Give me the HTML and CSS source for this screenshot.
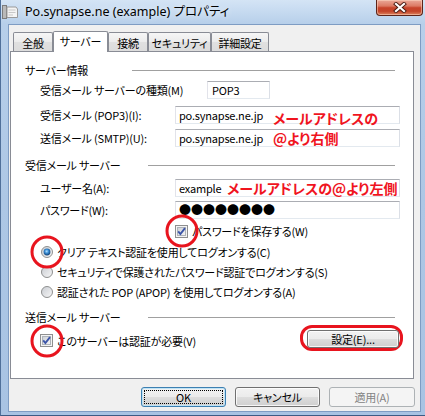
FILE: index.html
```html
<!DOCTYPE html>
<html lang="ja">
<head>
<meta charset="utf-8">
<title>Po.synapse.ne (example) プロパティ</title>
<link rel="stylesheet" href="styles.css">
</head>
<body>
<div class="window">
  <div class="titlebar">
    <svg class="app-icon" width="16" height="14" viewBox="0 0 16 14">
      <rect x="0.5" y="0.5" width="4" height="13" fill="#b9b9b9" stroke="#7d7d7d"/>
      <path d="M5 2 H14 L15.5 4 V12.5 H5 Z" fill="#f4f4f4" stroke="#9a9a9a"/>
      <path d="M6.5 5 H13.5 M6.5 7.5 H13.5 M6.5 10 H11" stroke="#c8c8c8"/>
    </svg>
    <span class="title">Po.synapse.ne (example) プロパティ</span>
    <div class="close">
      <svg width="14" height="11" viewBox="0 0 14 11">
        <path d="M3 2 L11 9 M11 2 L3 9" stroke="#4a1b12" stroke-width="4" stroke-linecap="square"/>
        <path d="M3 2 L11 9 M11 2 L3 9" stroke="#ffffff" stroke-width="2.2" stroke-linecap="square"/>
      </svg>
    </div>
  </div>

  <div class="client">
    <div class="tabs">
      <div class="tab tab-w40">全般</div>
      <div class="tab tab-active tab-w55">サーバー</div>
      <div class="tab tab-w40">接続</div>
      <div class="tab tab-w63">セキュリティ</div>
      <div class="tab tab-w58">詳細設定</div>
    </div>

    <div class="panel">
      <div class="grp-head">
        <span class="grp-title grp-title-short">サーバー情報</span>
        <span class="grp-line grp-line-long"></span>
      </div>

      <div class="row mt1">
        <span class="lbl lbl-wide">受信メール サーバーの種類(M)</span>
        <div class="field field-short">POP3</div>
      </div>

      <div class="row mt7">
        <span class="lbl">受信メール (POP3)(I):</span>
        <div class="field">
          <span class="val val-host">po.synapse.ne.jp</span>
          <span class="note note-low">メールアドレスの</span>
        </div>
      </div>

      <div class="row mt5">
        <span class="lbl">送信メール (SMTP)(U):</span>
        <div class="field">
          <span class="val val-host">po.synapse.ne.jp</span>
          <span class="note">@より右側</span>
        </div>
      </div>

      <div class="grp-head mt8">
        <span class="grp-title grp-title-long">受信メール サーバー</span>
        <span class="grp-line"></span>
      </div>

      <div class="row mt4">
        <span class="lbl">ユーザー名(A):</span>
        <div class="field">
          <span class="val val-user">example</span>
          <span class="note">メールアドレスの@より左側</span>
        </div>
      </div>

      <div class="row mt4">
        <span class="lbl">パスワード(W):</span>
        <div class="field">
          <span class="dots">●●●●●●●●</span>
        </div>
      </div>

      <div class="row row-save mt3">
        <span class="circled">
          <svg class="check" width="13" height="13" viewBox="0 0 13 13">
            <defs>
              <linearGradient id="cb1" x1="0" y1="0" x2="1" y2="1">
                <stop offset="0" stop-color="#cbcfd5"/>
                <stop offset="1" stop-color="#f6f6f6"/>
              </linearGradient>
            </defs>
            <rect x="0.5" y="0.5" width="12" height="12" fill="#f4f4f4" stroke="#8e8f8f"/>
            <rect x="2.5" y="2.5" width="8" height="8" fill="url(#cb1)" stroke="#aeb3b9"/>
            <path d="M3.2 6.4 L5.4 9 L10 3.2" stroke="#3b55a8" stroke-width="1.9" fill="none"/>
          </svg>
        </span>
        <span class="opt-text">パスワードを保存する(W)</span>
      </div>

      <div class="row row-radio mt3">
        <span class="circled">
          <svg class="radio" width="12" height="12" viewBox="0 0 12 12">
            <defs>
              <linearGradient id="rb1" x1="0" y1="0" x2="1" y2="1">
                <stop offset="0" stop-color="#c9ccd2"/>
                <stop offset="1" stop-color="#f7f7f7"/>
              </linearGradient>
              <radialGradient id="rd1" cx="0.45" cy="0.4" r="0.6">
                <stop offset="0" stop-color="#b7e3ff"/>
                <stop offset="0.45" stop-color="#3b8fd6"/>
                <stop offset="1" stop-color="#123f73"/>
              </radialGradient>
            </defs>
            <circle cx="6" cy="6" r="5.5" fill="url(#rb1)" stroke="#8e8f8f"/>
            <circle cx="6" cy="6" r="3.4" fill="url(#rd1)"/>
          </svg>
        </span>
        <span class="opt-text">クリア テキスト認証を使用してログオンする(C)</span>
      </div>

      <div class="row row-radio mt2">
        <svg class="radio" width="12" height="12" viewBox="0 0 12 12">
          <defs>
            <linearGradient id="rb2" x1="0" y1="0" x2="1" y2="1">
              <stop offset="0" stop-color="#c9ccd2"/>
              <stop offset="1" stop-color="#f7f7f7"/>
            </linearGradient>
          </defs>
          <circle cx="6" cy="6" r="5.5" fill="url(#rb2)" stroke="#8e8f8f"/>
        </svg>
        <span class="opt-text">セキュリティで保護されたパスワード認証でログオンする(S)</span>
      </div>

      <div class="row row-radio mt2">
        <svg class="radio" width="12" height="12" viewBox="0 0 12 12">
          <defs>
            <linearGradient id="rb3" x1="0" y1="0" x2="1" y2="1">
              <stop offset="0" stop-color="#c9ccd2"/>
              <stop offset="1" stop-color="#f7f7f7"/>
            </linearGradient>
          </defs>
          <circle cx="6" cy="6" r="5.5" fill="url(#rb3)" stroke="#8e8f8f"/>
        </svg>
        <span class="opt-text">認証された POP (APOP) を使用してログオンする(A)</span>
      </div>

      <div class="grp-head mt6">
        <span class="grp-title grp-title-long">送信メール サーバー</span>
        <span class="grp-line"></span>
      </div>

      <div class="row row-auth">
        <div class="auth-check">
          <span class="circled">
            <svg class="check" width="13" height="13" viewBox="0 0 13 13">
              <defs>
                <linearGradient id="cb2" x1="0" y1="0" x2="1" y2="1">
                  <stop offset="0" stop-color="#cbcfd5"/>
                  <stop offset="1" stop-color="#f6f6f6"/>
                </linearGradient>
              </defs>
              <rect x="0.5" y="0.5" width="12" height="12" fill="#f4f4f4" stroke="#8e8f8f"/>
              <rect x="2.5" y="2.5" width="8" height="8" fill="url(#cb2)" stroke="#aeb3b9"/>
              <path d="M3.2 6.4 L5.4 9 L10 3.2" stroke="#3b55a8" stroke-width="1.9" fill="none"/>
            </svg>
          </span>
          <span class="opt-text">このサーバーは認証が必要(V)</span>
        </div>
        <div class="red-frame">
          <div class="btn btn-settings">設定(E)...</div>
        </div>
      </div>
    </div>

    <div class="actions">
      <div class="btn btn-default"><span class="focus">OK</span></div>
      <div class="btn">キャンセル</div>
      <div class="btn btn-disabled btn-w86">適用(A)</div>
    </div>
  </div>
</div>
</body>
</html>
```

FILE: styles.css
```css
* { box-sizing: border-box; }

html, body {
  margin: 0;
  padding: 0;
}

body {
  width: 425px;
  height: 416px;
  overflow: hidden;
  font-family: "Noto Sans CJK JP", sans-serif;
  font-size: 11px;
  letter-spacing: -0.2px;
  font-feature-settings: "palt";
  color: #000;
  background: #b9d0ea;
}

.window {
  width: 425px;
  height: 416px;
  display: flex;
  flex-direction: column;
  background: linear-gradient(180deg, #d4e4f5 0px, #c3d8ef 14px, #b7cfea 24px, #adc7e5 200px, #a8c3e3 416px);
  border-left: 1px solid #50709a;
  border-bottom: 1px solid #3d5b84;
}

/* title bar */
.titlebar {
  height: 24px;
  flex: none;
  display: flex;
  align-items: flex-start;
}

.app-icon {
  flex: none;
  margin: 5px 0 0 1px;
}

.title {
  margin: 3px 0 0 7px;
  font-family: "Noto Sans", "Noto Sans CJK JP", sans-serif;
  font-size: 12.5px;
  letter-spacing: 0;
  line-height: 17px;
  color: #000;
  white-space: nowrap;
  text-shadow: 0 0 6px rgba(255,255,255,0.9);
}

.close {
  margin-left: auto;
  margin-right: 2px;
  width: 47px;
  height: 16px;
  border: 1px solid #5d2419;
  border-top: none;
  border-radius: 0 0 4px 4px;
  background: linear-gradient(180deg, #eaa898 0%, #dc7a64 40%, #c7432a 52%, #c4452a 75%, #dc8460 100%);
  box-shadow: inset 0 0 0 1px rgba(255,220,200,0.5);
  display: flex;
  align-items: center;
  justify-content: center;
}

/* client area */
.client {
  flex: 1;
  margin: 0 4px 3px 7px;
  background: #f0f0f0;
  border: 1px solid #7e9cc3;
  display: flex;
  flex-direction: column;
}

.tabs {
  display: flex;
  align-items: flex-end;
  padding: 6px 0 0 4px;
  height: 26px;
  flex: none;
}

.tab {
  height: 19px;
  border: 1px solid #898c95;
  border-bottom: none;
  border-radius: 2px 2px 0 0;
  background: linear-gradient(180deg, #f6f6f6 0%, #ececec 48%, #e0e0e0 52%, #dcdcdc 100%);
  display: flex;
  align-items: center;
  justify-content: center;
  white-space: nowrap;
  padding-top: 1px;
}

.tab-active {
  height: 21px;
  margin-bottom: -1px;
  background: #fff;
  position: relative;
  z-index: 1;
  padding-top: 0;
  padding-bottom: 2px;
}

.tab-w40 { width: 40px; }
.tab-w55 { width: 55px; }
.tab-w63 { width: 63px; }
.tab-w58 { width: 58px; }

/* panel */
.panel {
  margin-left: 1px;
  width: 404px;
  height: 328px;
  flex: none;
  background: #fff;
  border: 1px solid #898c95;
  padding: 8px 10px 0 14px;
  display: flex;
  flex-direction: column;
}

.grp-head {
  display: flex;
  align-items: center;
  height: 20px;
  flex: none;
}

.grp-title {
  flex: none;
  white-space: nowrap;
}

.grp-title-short { width: 107px; }
.grp-title-long { width: 123px; }

.grp-line {
  flex: none;
  width: 247px;
  height: 1px;
  background: #a0a0a0;
}

.grp-line-long { width: 263px; }

.row {
  display: flex;
  align-items: center;
  height: 18px;
  flex: none;
  padding-left: 15px;
}

.mt1 { margin-top: 1px; }
.mt2 { margin-top: 2px; }
.mt3 { margin-top: 3px; }
.mt4 { margin-top: 4px; }
.mt5 { margin-top: 5px; }
.mt6 { margin-top: 6px; }
.mt7 { margin-top: 7px; }
.mt8 { margin-top: 8px; }

.lbl {
  width: 135px;
  flex: none;
  white-space: nowrap;
}

.lbl-wide { width: 167px; }

.field {
  width: 225px;
  height: 18px;
  flex: none;
  background: #fff;
  border: 1px solid;
  border-color: #abadb3 #dbdfe6 #e3e9ef #e2e3ea;
  display: flex;
  align-items: center;
  padding-left: 3px;
  white-space: nowrap;
  overflow: visible;
}

.field-short {
  width: 63px;
  padding-left: 4px;
}

.val { flex: none; }
.val-host { width: 94px; }
.val-user { width: 48px; }

.note {
  color: #f0141e;
  font-weight: 700;
  font-size: 14px;
  letter-spacing: 0;
  line-height: 1;
  white-space: nowrap;
}

.note-low { margin-top: 5px; }

.dots {
  font-size: 12px;
  line-height: 1;
  letter-spacing: 0;
  font-feature-settings: normal;
}

.row-save { padding-left: 150px; }

.row-radio { padding-left: 16px; }

.circled {
  position: relative;
  display: flex;
  flex: none;
}

.circled::after {
  content: "";
  position: absolute;
  left: 50%;
  top: 50%;
  width: 27px;
  height: 27px;
  transform: translate(-50%, -50%);
  border: 3px solid #e8141e;
  border-radius: 50%;
  z-index: 2;
}

.check, .radio { display: block; flex: none; }

.opt-text {
  margin-left: 4px;
  white-space: nowrap;
}

.row-radio .opt-text { margin-left: 4px; }

.row-auth {
  height: 26px;
  margin-top: -2px;
  align-items: flex-start;
}

.auth-check {
  display: flex;
  align-items: center;
  height: 13px;
  margin-top: 9px;
}

.red-frame {
  margin-left: auto;
  border: 3px solid #e8141e;
  border-radius: 12px;
  padding: 2px 1px 0 4px;
  height: 26px;
}

/* buttons */
.btn {
  width: 85px;
  height: 20px;
  flex: none;
  border: 1px solid #707070;
  border-radius: 3px;
  background: linear-gradient(180deg, #f2f2f2 0%, #ebebeb 49%, #dddddd 51%, #cfcfcf 100%);
  box-shadow: inset 0 0 0 1px rgba(255,255,255,0.8);
  display: flex;
  align-items: center;
  justify-content: center;
  white-space: nowrap;
}

.btn-settings {
  width: 92px;
  height: 18px;
}

.btn-default {
  border-color: #3c7fb1;
  box-shadow: inset 0 0 0 1px #bfe3f6;
  padding: 2px;
}

.focus {
  flex: 1;
  align-self: stretch;
  border: 1px dotted #000;
  display: flex;
  align-items: center;
  justify-content: center;
}

.btn-disabled {
  border-color: #adb2b5;
  background: #f4f4f4;
  box-shadow: none;
  color: #838383;
}

.btn-w86 { width: 86px; }

.actions {
  display: flex;
  gap: 9px;
  padding-left: 132px;
  margin-top: 8px;
  flex: none;
}
```
